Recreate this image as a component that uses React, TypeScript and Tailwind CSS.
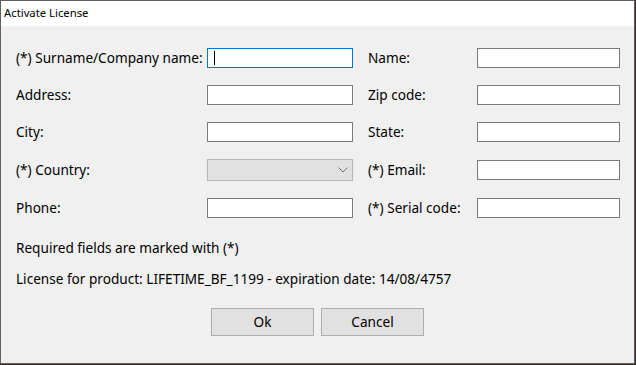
const font = { fontFamily: '"Noto Sans", "Open Sans", sans-serif' };

const TextBox = ({ w, focused }: { w: string; focused?: boolean }) => {
  return (
    <div
      className={`flex h-[20px] items-center bg-white ${w} border ${
        focused ? "border-[#0078d7]" : "border-[#7a7a7a]"
      }`}
    >
      {focused && <span className="ml-[6px] h-[14px] w-px bg-black" />}
    </div>
  );
};

const ComboBox = () => {
  return (
    <div className="flex h-[22px] w-[146px] items-center justify-end border border-[#b4b4b4] bg-[#e1e1e1] pr-[4px]">
      <svg width="10" height="6" viewBox="0 0 10 6">
        <polyline points="0.5,0.5 5,5 9.5,0.5" fill="none" stroke="#707070" strokeWidth="1" />
      </svg>
    </div>
  );
};

type Row = {
  left: string;
  right: string;
  leftField: React.ReactNode;
  h: string;
};

const rows: Row[] = [
  { left: "(*) Surname/Company name:", right: "Name:", leftField: <TextBox w="w-[146px]" focused />, h: "h-[37px]" },
  { left: "Address:", right: "Zip code:", leftField: <TextBox w="w-[146px]" />, h: "h-[37px]" },
  { left: "City:", right: "State:", leftField: <TextBox w="w-[146px]" />, h: "h-[37px]" },
  { left: "(*) Country:", right: "(*) Email:", leftField: <ComboBox />, h: "h-[39px]" },
  { left: "Phone:", right: "(*) Serial code:", leftField: <TextBox w="w-[146px]" />, h: "h-[37px]" },
];

const App = () => {
  return (
    <div className="h-[365px] w-[636px] bg-[#3b2a1e]" style={font}>
      <div className="flex h-[364px] w-[635px] flex-col border border-[#5f5f5f] bg-[#f0f0f0] text-[13.6px] text-black">
        <div className="flex h-[25px] items-center bg-white pl-[3px] text-[11.3px]">Activate License</div>

        <div className="pl-[15px] pt-[13px]">
          {rows.map((r) => (
            <div key={r.left} className={`flex items-center ${r.h}`}>
              <div className="w-[191px] pt-px">{r.left}</div>
              {r.leftField}
              <div className="ml-[15px] w-[109px] pt-px">{r.right}</div>
              <TextBox w="w-[143px]" />
            </div>
          ))}

          <div className="mt-[14px] leading-[16px]">Required fields are marked with (*)</div>
          <div className="mt-[15px] leading-[16px]">
            License for product: LIFETIME_BF_1199 - expiration date: 14/08/4757
          </div>
        </div>

        <div className="mt-[21px] flex justify-center gap-[7px]">
          <button className="h-[28px] w-[103px] border border-[#adadad] bg-[#e1e1e1]">Ok</button>
          <button className="h-[28px] w-[103px] border border-[#adadad] bg-[#e1e1e1]">Cancel</button>
        </div>
      </div>
    </div>
  );
};

export default App;
